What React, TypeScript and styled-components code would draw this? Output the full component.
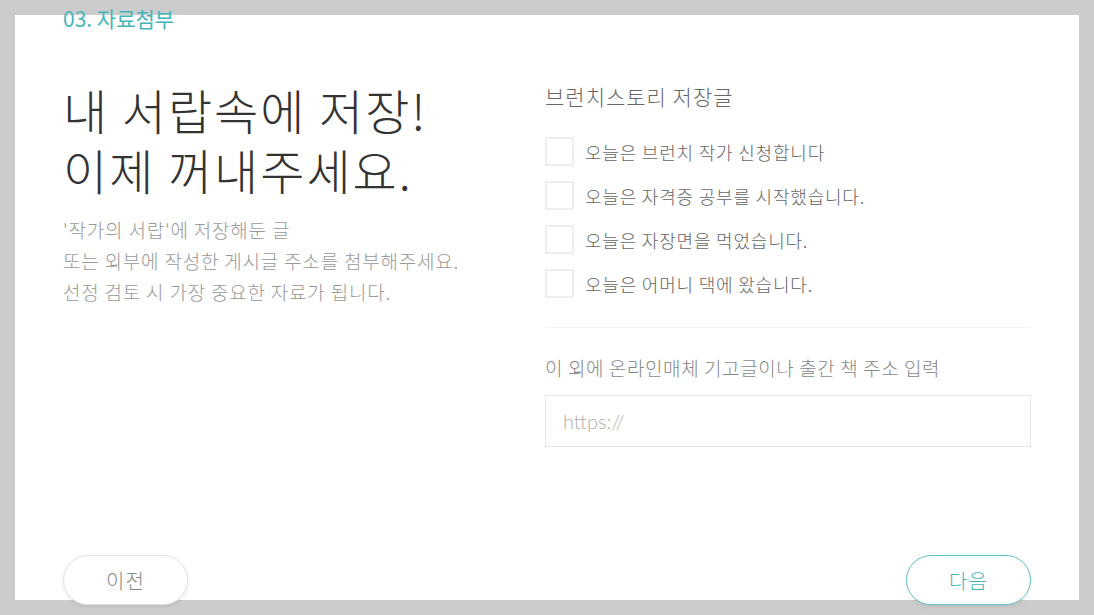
import styled, { createGlobalStyle } from "styled-components";

const GlobalStyle = createGlobalStyle`
  html, body {
    margin: 0;
    padding: 0;
    background-color: #cccccc;
    font-family: "Noto Sans CJK KR", "Noto Sans", sans-serif;
  }
  * {
    box-sizing: border-box;
  }
`;

const Page = styled.div`
  padding: 15px;
  height: 615px;
`;

const Panel = styled.div`
  display: flex;
  flex-direction: column;
  height: 585px;
  padding: 0 48px;
  background-color: #ffffff;
`;

const StepLabel = styled.div`
  margin-top: -12px;
  font-size: 21px;
  line-height: 30px;
  color: #45b6b8;
`;

const Columns = styled.div`
  display: grid;
  grid-template-columns: 1fr 486px;
  margin-top: 46px;
`;

const LeftColumn = styled.div`
  display: flex;
  flex-direction: column;
`;

const Headline = styled.h1`
  margin: 0;
  font-size: 48px;
  font-weight: 200;
  line-height: 60px;
  letter-spacing: 2px;
  color: #333333;
`;

const Description = styled.p`
  margin: 15px 0 0;
  font-size: 19px;
  line-height: 31px;
  letter-spacing: 0.8px;
  font-weight: 300;
  color: #999999;
`;

const RightColumn = styled.div`
  display: flex;
  flex-direction: column;
  padding-top: 2px;
`;

const SectionTitle = styled.h2`
  margin: 0;
  font-size: 21px;
  font-weight: 300;
  line-height: 30px;
  letter-spacing: 1px;
  color: #666666;
`;

const CheckList = styled.ul`
  display: flex;
  flex-direction: column;
  gap: 15px;
  margin: 26px 0 0;
  padding: 0;
  list-style: none;
`;

const CheckRow = styled.li`
  display: flex;
  align-items: center;
  gap: 11px;
`;

const CheckBox = styled.span`
  width: 29px;
  height: 29px;
  border: 2px solid #eeeeee;
  flex-shrink: 0;
`;

const CheckText = styled.span`
  font-size: 18px;
  font-weight: 300;
  line-height: 26px;
  letter-spacing: 0.8px;
  color: #666666;
`;

const Divider = styled.hr`
  margin: 29px 0 0;
  border: none;
  border-top: 1px solid #f2f2f2;
`;

const InputLabel = styled.label`
  margin-top: 26px;
  font-size: 19px;
  font-weight: 300;
  line-height: 27px;
  letter-spacing: 0.6px;
  color: #888888;
`;

const UrlInput = styled.input`
  margin-top: 14px;
  height: 52px;
  width: 100%;
  padding: 0 17px;
  border: 1px solid #e6e6e6;
  font-family: Lato, "Noto Sans CJK KR", sans-serif;
  font-size: 20px;
  font-weight: 300;
  color: #555555;
  outline: none;
  &::placeholder {
    color: #b0b0b0;
  }
`;

const Footer = styled.div`
  display: flex;
  justify-content: space-between;
  margin-top: auto;
  margin-bottom: -5px;
`;

const NavButton = styled.button<{ primary?: boolean }>`
  width: 125px;
  height: 50px;
  border-radius: 25px;
  border: 1px solid ${(p) => (p.primary ? "#5cc3c3" : "#e3e3e3")};
  background-color: #ffffff;
  color: ${(p) => (p.primary ? "#45b6b8" : "#888888")};
  font-family: "Noto Sans CJK KR", sans-serif;
  font-size: 20px;
  font-weight: 300;
  letter-spacing: 1px;
  box-shadow: 0 2px 4px rgba(0, 0, 0, 0.08);
  cursor: pointer;
`;

const savedPosts = [
  "오늘은 브런치 작가 신청합니다",
  "오늘은 자격증 공부를 시작했습니다.",
  "오늘은 자장면을 먹었습니다.",
  "오늘은 어머니 댁에 왔습니다.",
];

const App = () => {
  return (
    <>
      <GlobalStyle />
      <Page>
        <Panel>
          <StepLabel>03. 자료첨부</StepLabel>
          <Columns>
            <LeftColumn>
              <Headline>
                내 서랍속에 저장!
                <br />
                이제 꺼내주세요.
              </Headline>
              <Description>
                '작가의 서랍'에 저장해둔 글
                <br />
                또는 외부에 작성한 게시글 주소를 첨부해주세요.
                <br />
                선정 검토 시 가장 중요한 자료가 됩니다.
              </Description>
            </LeftColumn>
            <RightColumn>
              <SectionTitle>브런치스토리 저장글</SectionTitle>
              <CheckList>
                {savedPosts.map((post) => (
                  <CheckRow key={post}>
                    <CheckBox />
                    <CheckText>{post}</CheckText>
                  </CheckRow>
                ))}
              </CheckList>
              <Divider />
              <InputLabel>이 외에 온라인매체 기고글이나 출간 책 주소 입력</InputLabel>
              <UrlInput placeholder="https://" />
            </RightColumn>
          </Columns>
          <Footer>
            <NavButton>이전</NavButton>
            <NavButton primary>다음</NavButton>
          </Footer>
        </Panel>
      </Page>
    </>
  );
};

export default App;
